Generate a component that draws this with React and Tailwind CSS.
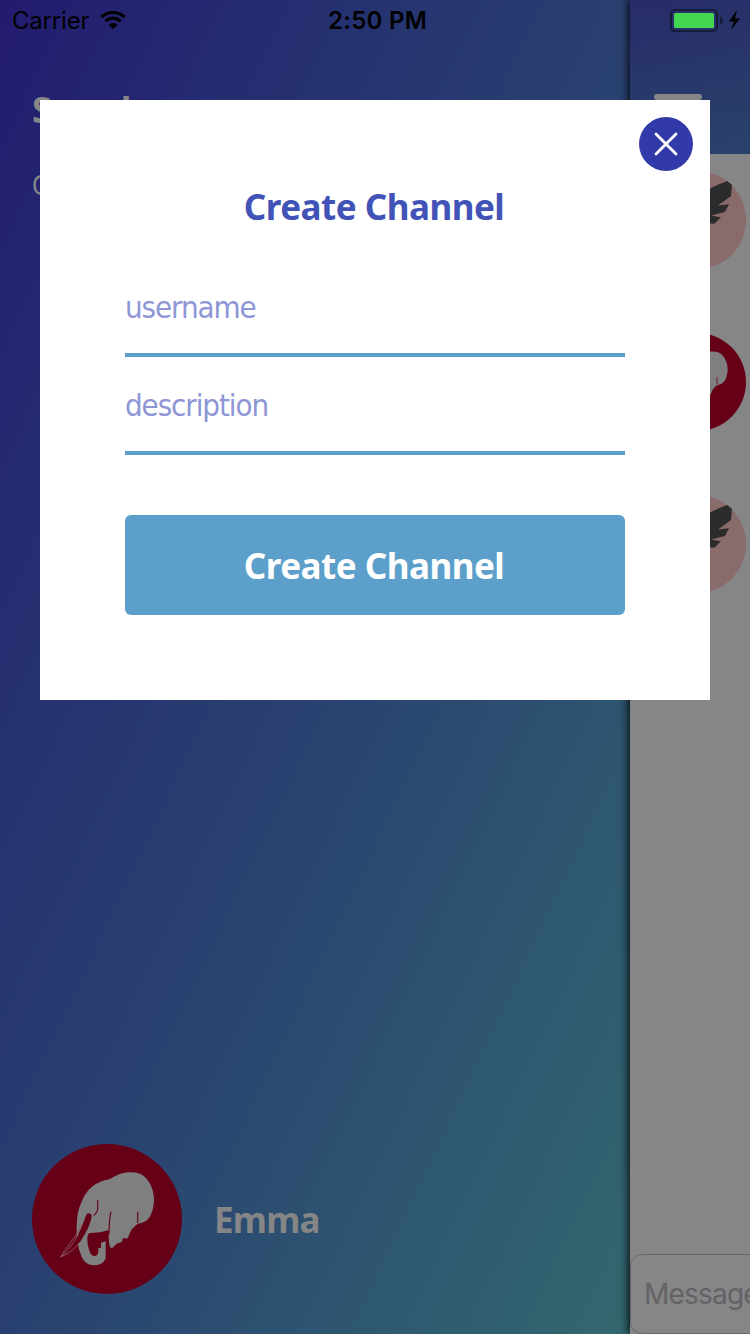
const Elephant = ({ className }) => (
  <svg viewBox="0 0 150 150" className={className}>
    <circle cx="75" cy="75" r="75" fill="#660017" />
    <path
      fill="#7f7f7f"
      d="M45 95C44 78 45 67 49.7 57.7C53 49 59 42 66 39C71 36 75 36 78 35C85 31 90 28.3 99 28.3C105 28.3 110 30 113 33C119 39 122 48 122 56C122 62 120 70 117 74C114 78 110 79 107 79.5C103 81 103 83 101 84C98 87 97 92 95.7 94.3L91 94.3L89.7 98L85 99.5L80.3 104L78 103.5C76.500 98 76.500 92 77 86C71 88 64 89 58 89C54.500 90 55 96 56.300 103C57.500 108 59 112 62.300 112C65 112 66.300 110 66.300 108L66.300 104L69 104V99L73.700 97V114C72 119 68 121.300 62 121.300C55 121 51 117 49 111C47 106 46 101 45 95Z"
    />
    <path
      d="M54.7 70Q58 68 59.7 71.500C59.500 79 53 91 46 101C41 107 35 110 29 112.700C38 103 46 93 50 82Z"
      fill="#660017"
    />
    <path
      d="M28.500 113C35 103 39 98 43.500 92Q47 87 49.500 80M28.500 113C38 109 44 104 47.500 98M30 112C38 104 42 98 46.500 90"
      fill="none"
      stroke="#8a6066"
      strokeWidth="0.9"
    />
    <path
      d="M65.700 56V66Q64 69.500 62 71.700M79 67.700Q77 76 77 90M105.700 67.700V79"
      fill="none"
      stroke="#660017"
      strokeWidth="1.1"
    />
  </svg>
);

const Eagle = ({ className }) => (
  <svg viewBox="0 0 98 98" className={className}>
    <circle cx="49" cy="49" r="49" fill="#8a6b6b" />
    <path fill="#2b2b2b" d="M45 28Q60 17 79.300 10L84 14L83 25L70 34.500L81 33.300L77 41L63 44.500L73 46.300L66.300 52.700L45 51Z" />
  </svg>
);

const StatusBar = () => (
  <div className="absolute inset-x-0 top-0 flex h-10 items-center font-['Inter','Liberation_Sans',sans-serif] text-black">
    <span className="w-[88px] pt-0.5 pl-3 text-[24px] tracking-[-0.2px] whitespace-nowrap">Carrier</span>
    <svg viewBox="0 0 26 18" className="ml-3 h-[18px] w-[26px]">
      <path d="M1.2 6Q13-3.300 24.800 6M5.300 10.200Q13 4 20.700 10.200" fill="none" stroke="black" strokeWidth="3" />
      <path d="M8.500 14Q13 10 17.500 14L13 18Z" />
    </svg>
    <span className="ml-[202px] w-[100px] pt-0.5 text-[24px] font-semibold tracking-[0.3px] whitespace-nowrap">2:50 PM</span>
    <svg viewBox="0 0 72 24" className="ml-[242px] h-6 w-[72px] shrink-0">
      <rect x="1" y="2" width="46" height="21" rx="4" fill="none" stroke="#151b38" strokeWidth="2" />
      <rect x="4" y="5" width="40" height="15" rx="1.5" fill="#45d651" />
      <path d="M50 8.500Q53 10 53 12.500T50 16.500Z" fill="#151b38" />
      <path d="M67 2L59 13.500H64L61 22L70 10.500H65Z" />
    </svg>
  </div>
);

const Field = ({ label }) => (
  <div className="flex h-[98px] items-center border-b-4 border-[#5b9fca] pt-[3px] text-[#8e96d6]">
    <span className="font-['DejaVu_Sans_Condensed','DejaVu_Sans',sans-serif] text-[31px] tracking-[-1.1px]">{label}</span>
  </div>
);

export default function App() {
  return (
    <div className="relative flex h-[1334px] w-[750px] overflow-hidden bg-[#868686] font-['Noto_Sans',sans-serif]">
      <aside className="flex w-[630px] shrink-0 flex-col justify-between bg-linear-to-br from-[#231a70] via-[#294070] via-50% to-[#33686f] px-8 pt-[84px] pb-10 text-[#868686]">
        <div>
          <h1 className="pt-px text-[35px] leading-[50px] font-bold tracking-[-0.9px]">Smack</h1>
          <p className="mt-[27px] font-['DejaVu_Sans_Condensed',sans-serif] text-[26px] leading-[48px]">CHANNELS</p>
        </div>
        <div className="flex items-center gap-8">
          <Elephant className="size-[150px]" />
          <span className="pt-0.5 text-[35px] font-bold tracking-[-0.8px]">Emma</span>
        </div>
      </aside>
      <main className="relative flex w-[120px] flex-col shadow-[0_0_9px_1px_#000000]">
        <header className="h-[154px] overflow-hidden bg-[linear-gradient(168deg,#272c69,#29426b)] px-6 pt-[94px]">
          <div className="h-[6px] w-12 rounded-full bg-[#868686]" />
        </header>
        <div className="flex flex-1 flex-col gap-16 bg-[#868686] pt-[17px] pl-[18px]">
          <Eagle className="size-[98px]" />
          <Elephant className="size-[98px]" />
          <Eagle className="size-[98px]" />
        </div>
        <div className="flex h-20 w-[300px] items-center rounded-xl border-[1.5px] border-[#68686b] bg-[#868686] pl-[13px] font-['Inter','Liberation_Sans',sans-serif] text-[28px] tracking-[-0.8px] text-[#636367]">
          Message
        </div>
      </main>
      <StatusBar />
      <section className="absolute top-[100px] left-10 h-[600px] w-[670px] bg-white px-[85px] pt-[82px]">
        <button aria-label="Close" className="absolute top-[17px] right-[17px] size-[54px]">
          <svg viewBox="0 0 54 54">
            <circle cx="27" cy="27" r="27" fill="#3239a8" />
            <path d="M17 17L37 37M37 17L17 37" stroke="white" strokeWidth="2.8" strokeLinecap="round" />
          </svg>
        </button>
        <h2 className="pr-0.5 text-center text-[35px] leading-[50px] font-bold tracking-[-0.5px] text-[#4253b8]">Create Channel</h2>
        <div className="mt-[27px]">
          <Field label="username" />
          <Field label="description" />
        </div>
        <button className="mt-[60px] h-[100px] w-full rounded-md bg-[#5b9fca] pt-0.5 pr-0.5 text-[35px] font-bold tracking-[-0.5px] text-white">
          Create Channel
        </button>
      </section>
    </div>
  );
}
